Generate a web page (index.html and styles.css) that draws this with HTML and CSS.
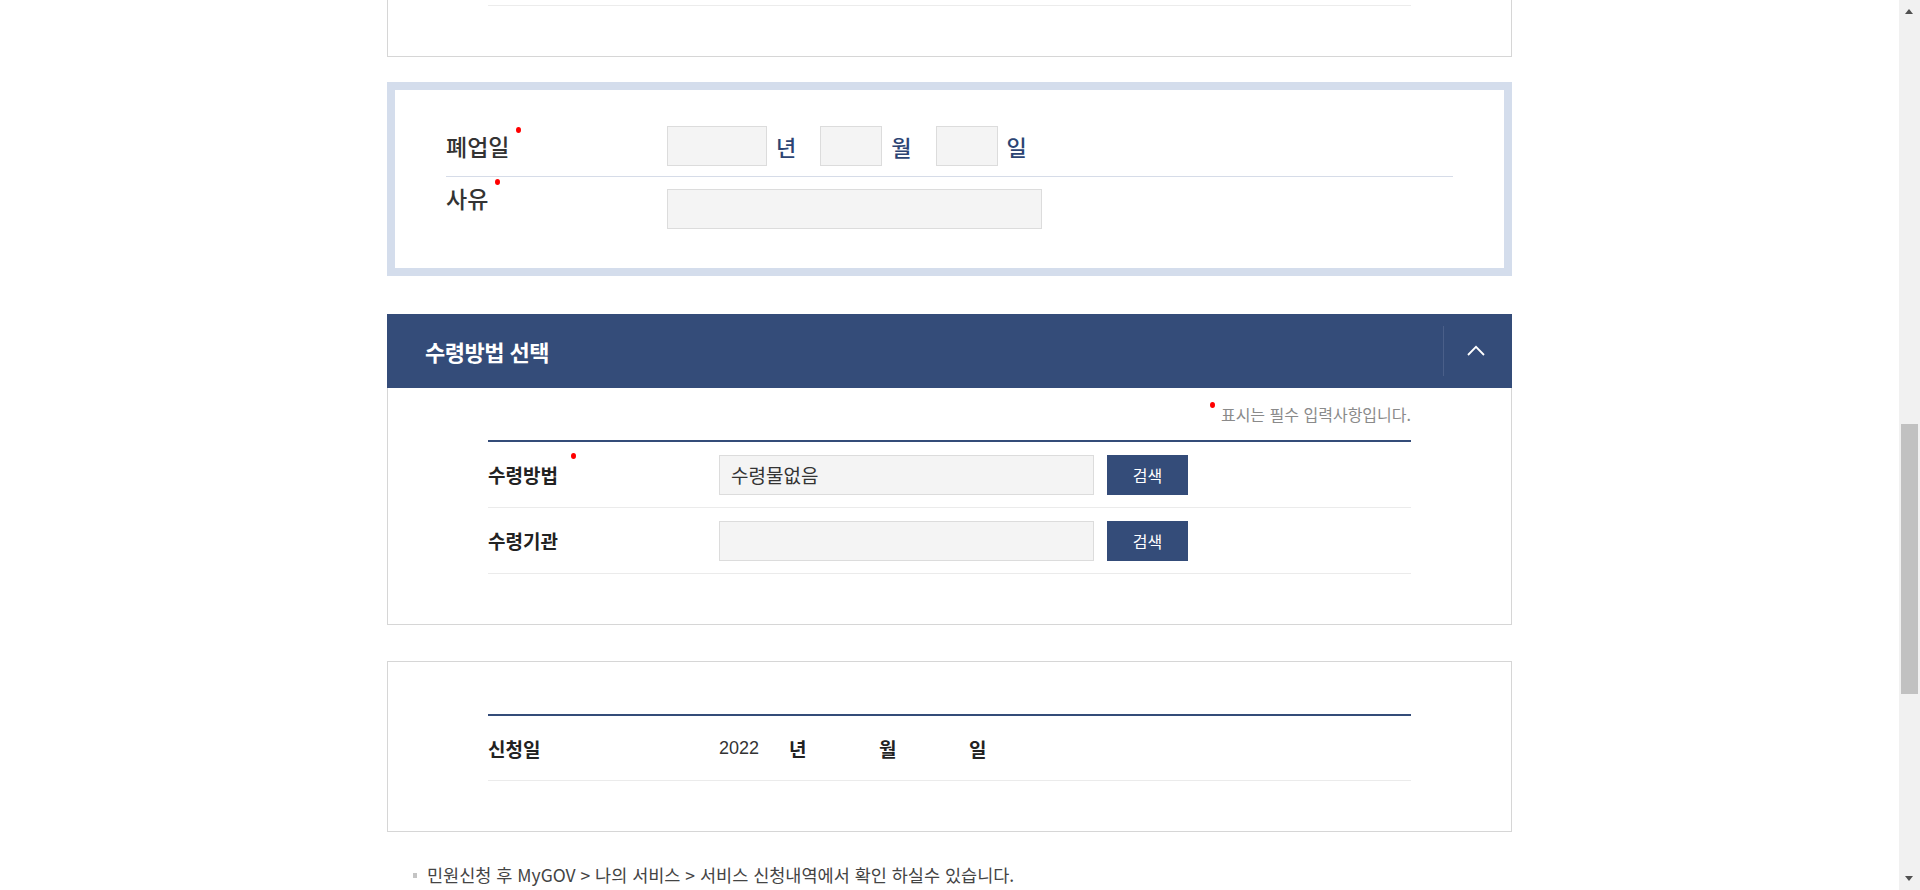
FILE: index.html
```html
<!DOCTYPE html>
<html lang="ko">
<head>
<meta charset="utf-8">
<title>폐업 신고</title>
<link rel="stylesheet" href="styles.css">
</head>
<body>
<div class="viewport">
  <div class="page">
    <section class="card card-prev">
      <div class="prev-row"></div>
    </section>

    <section class="closure">
      <div class="closure-row row-date">
        <div class="c-label">폐업일<span class="req"></span></div>
        <div class="date-fields">
          <span class="box box-year"></span><span class="unit">년</span>
          <span class="box box-md"></span><span class="unit">월</span>
          <span class="box box-md"></span><span class="unit">일</span>
        </div>
      </div>
      <div class="closure-row row-reason">
        <div class="c-label">사유<span class="req"></span></div>
        <span class="box box-reason"></span>
      </div>
    </section>

    <section class="panel">
      <header class="panel-head">
        <h2 class="panel-title">수령방법 선택</h2>
        <div class="panel-toggle">
          <svg width="18" height="11" viewBox="0 0 18 11"><path d="M1 10 L9 1.8 L17 10" fill="none" stroke="#ffffff" stroke-width="1.8"/></svg>
        </div>
      </header>
      <div class="panel-body">
        <p class="req-note"><span class="req"></span>표시는 필수 입력사항입니다.</p>
        <div class="form-table">
          <div class="f-row">
            <div class="f-label">수령방법<span class="req"></span></div>
            <span class="field">수령물없음</span>
            <span class="btn">검색</span>
          </div>
          <div class="f-row">
            <div class="f-label">수령기관</div>
            <span class="field"></span>
            <span class="btn">검색</span>
          </div>
        </div>
      </div>
    </section>

    <section class="card card-date">
      <div class="form-table">
        <div class="f-row">
          <div class="f-label">신청일</div>
          <span class="year-val">2022</span>
          <span class="d-unit u-year">년</span>
          <span class="d-unit u-month">월</span>
          <span class="d-unit u-day">일</span>
        </div>
      </div>
    </section>

    <p class="notice"><span class="bullet"></span>민원신청 후 MyGOV &gt; 나의 서비스 &gt; 서비스 신청내역에서 확인 하실수 있습니다.</p>
  </div>
</div>
<div class="scrollbar" aria-hidden="true">
  <div class="sb-btn sb-up"><span class="tri-up"></span></div>
  <div class="sb-thumb"></div>
  <div class="sb-btn sb-down"><span class="tri-down"></span></div>
</div>
</body>
</html>
```
FILE: styles.css
```css
html, body {
  height: 100%;
}
body {
  margin: 0;
  background: #ffffff;
  font-family: "Noto Sans CJK KR", "Noto Sans", sans-serif;
  color: #333333;
  display: flex;
  overflow: hidden;
}
.viewport {
  flex: 1;
  height: 890px;
  overflow: hidden;
}
.scrollbar {
  flex: none;
  width: 21px;
  height: 890px;
  background: #f1f1f1;
  display: flex;
  flex-direction: column;
}
.sb-btn {
  height: 21px;
  flex: none;
  box-sizing: border-box;
  padding-left: 6px;
}
.sb-up { padding-top: 9px; }
.sb-down { margin-top: auto; padding-top: 7px; }
.tri-up, .tri-down {
  display: block;
  width: 0;
  height: 0;
  border-left: 4.5px solid transparent;
  border-right: 4.5px solid transparent;
}
.tri-up { border-bottom: 5px solid #505050; }
.tri-down { border-top: 5px solid #505050; }
.sb-thumb {
  flex: none;
  height: 270px;
  margin: 403px 2px 0;
  background: #c1c1c1;
}

.page {
  width: 1125px;
  margin: 0 auto;
}
.card {
  border: 1px solid #d6d6d6;
  background: #ffffff;
}
.card-prev {
  margin-top: -55px;
  padding: 0 100px 50px;
}
.prev-row {
  height: 59px;
  border-bottom: 1px solid #ececec;
}

/* closure box */
.closure {
  margin-top: 25px;
  border: 8px solid #d4ddec;
  padding: 0 51px;
  height: 194px;
  box-sizing: border-box;
}
.closure-row {
  display: flex;
}
.row-date {
  align-items: center;
  padding-top: 36px;
  padding-bottom: 10px;
  border-bottom: 1px solid #d6dce8;
}
.row-reason {
  align-items: flex-start;
  padding-top: 7px;
}
.c-label {
  width: 221px;
  flex: none;
  font-size: 23px;
  font-weight: 500;
  line-height: 28px;
  color: #333333;
}
.row-reason .box-reason {
  margin-top: 5px;
}
.req {
  display: inline-block;
  width: 5px;
  height: 6px;
  border-radius: 50%;
  background: #ff0000;
  vertical-align: top;
  margin-left: 7px;
  margin-top: -5px;
}
.date-fields {
  display: flex;
  align-items: center;
}
.box {
  display: block;
  height: 40px;
  box-sizing: border-box;
  border: 1px solid #dcdcdc;
  background: #f4f4f4;
}
.box-year { width: 100px; }
.box-md { width: 62px; }
.box-reason { width: 375px; }
.unit {
  font-size: 22px;
  font-weight: 500;
  color: #2c4473;
  margin: 0 24px 0 9px;
}
.unit:last-child { margin-right: 0; }

/* panel */
.panel {
  margin-top: 38px;
}
.panel-head {
  height: 74px;
  background: #344c79;
  display: flex;
  align-items: center;
  justify-content: space-between;
}
.panel-title {
  margin: 0 0 0 38px;
  font-size: 22px;
  font-weight: 700;
  color: #ffffff;
  letter-spacing: -0.5px;
}
.panel-toggle {
  width: 68px;
  height: 50px;
  border-left: 1px solid #4a5f89;
  display: flex;
  align-items: center;
  justify-content: center;
}
.panel-toggle svg {
  margin-left: -5px;
  margin-top: -2px;
}
.panel-body {
  border: 1px solid #d6d6d6;
  border-top: none;
  padding: 15px 100px 50px;
}
.req-note {
  margin: 0 0 15px;
  height: 22px;
  line-height: 22px;
  font-size: 16px;
  color: #8a8a8a;
  text-align: right;
}
.req-note .req {
  margin: -1px 6px 0 0;
}
.form-table {
  border-top: 2px solid #344c79;
}
.f-row {
  display: flex;
  align-items: center;
  height: 66px;
  box-sizing: border-box;
  border-bottom: 1px solid #ebebeb;
}
.f-label {
  width: 231px;
  flex: none;
  font-size: 19px;
  font-weight: 700;
  color: #222222;
}
.f-label .req {
  margin-top: -8px;
  margin-left: 13px;
}
.field {
  display: flex;
  align-items: center;
  width: 375px;
  height: 40px;
  box-sizing: border-box;
  border: 1px solid #dcdcdc;
  background: #f4f4f4;
  padding: 0 11px;
  font-size: 19px;
  color: #333333;
}
.btn {
  display: flex;
  align-items: center;
  justify-content: center;
  width: 81px;
  height: 40px;
  margin-left: 13px;
  background: #344c79;
  color: #ffffff;
  font-size: 16px;
}

/* date card */
.card-date {
  margin-top: 36px;
  padding: 52px 100px 50px;
}
.card-date .f-row {
  height: 65px;
}
.year-val {
  font-family: "Liberation Sans", Arial, sans-serif;
  font-size: 18px;
  color: #333333;
  width: 70px;
}
.d-unit {
  font-size: 19px;
  font-weight: 700;
  color: #222222;
}
.u-year { width: 90px; }
.u-month { width: 90px; }

.notice {
  margin: 31px 0 0;
  padding-left: 26px;
  font-size: 17.5px;
  line-height: 24px;
  color: #444444;
  display: flex;
  align-items: center;
}
.bullet {
  display: inline-block;
  width: 4px;
  height: 5px;
  background: #c4c4c4;
  margin-right: 10px;
}
```
